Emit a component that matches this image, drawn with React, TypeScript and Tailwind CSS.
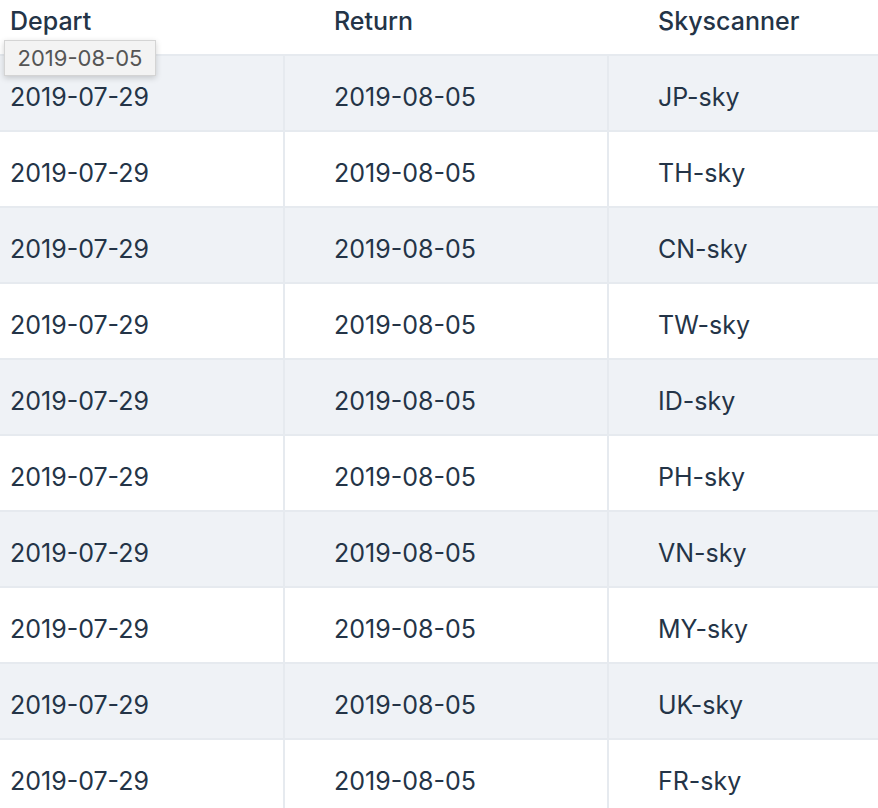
import React from "react";

const rows = ["JP", "TH", "CN", "TW", "ID", "PH", "VN", "MY", "UK", "FR"];

export default function App() {
  return (
    <div
      className="relative h-[808px] w-[878px] overflow-hidden bg-white text-[25px] text-[#243447]"
      style={{ fontFamily: "Inter, 'Noto Sans', sans-serif" }}
    >
      <div className="grid h-[54px] grid-cols-[283px_324px_1fr] font-medium">
        <div className="pl-[10px] pt-[3px]">Depart</div>
        <div className="pl-[51px] pt-[3px]">Return</div>
        <div className="pl-[51px] pt-[3px]">Skyscanner</div>
      </div>
      {rows.map((code, i) => (
        <div
          key={code}
          className={`grid grid-cols-[283px_324px_1fr] border-b-2 border-[#e6eaef] ${
            i % 2 === 0 ? "bg-[#eff2f6]" : "bg-white"
          } ${i === 0 ? "h-[78px] border-t-2" : "h-[76px]"}`}
        >
          <div className="flex items-center pl-[10px] pt-[10px]">2019-07-29</div>
          <div className="flex items-center border-l-2 border-[#e6eaef] pl-[49px] pt-[10px]">
            2019-08-05
          </div>
          <div className="flex items-center border-l-2 border-[#e6eaef] pl-[49px] pt-[10px]">
            {code}-sky
          </div>
        </div>
      ))}
      <div className="absolute left-[4px] top-[40px] flex h-[36px] w-[152px] items-center justify-center border border-[#d4d4d4] bg-[#f3f3f3] text-[22px] text-[#555] shadow-[0_2px_6px_rgba(0,0,0,0.18)]">
        2019-08-05
      </div>
    </div>
  );
}
